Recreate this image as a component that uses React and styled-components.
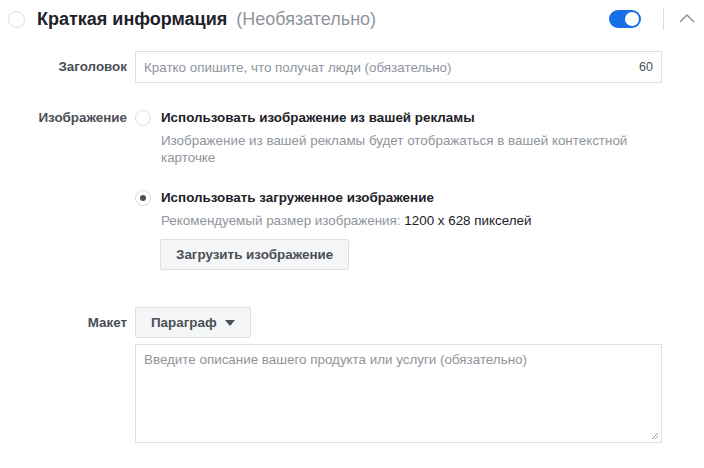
import React from "react";
import styled, { createGlobalStyle } from "styled-components";

const Global = createGlobalStyle`
  html, body { margin: 0; padding: 0; background: #fff; }
  body { font-family: "Liberation Sans", Arial, sans-serif; color: #1d2129; }
  * { box-sizing: border-box; }
`;

const Page = styled.div`
  width: 704px;
  height: 468px;
  overflow: hidden;
  background: #fff;
`;

const Header = styled.div`
  display: flex;
  align-items: center;
  height: 38px;
  padding: 0 10px 0 8px;
`;

const Circle = styled.span`
  width: 17px;
  height: 17px;
  border-radius: 50%;
  border: 1px solid #dadde1;
  background: #fff;
  flex-shrink: 0;
  margin-right: 12px;
`;

const Title = styled.span`
  font-size: 18px;
  font-weight: bold;
  color: #1d2129;
`;

const Optional = styled.span`
  font-size: 18px;
  color: #90949c;
  margin-left: 9px;
`;

const Spacer = styled.div`
  flex: 1;
`;

const Toggle = styled.span`
  position: relative;
  width: 32px;
  height: 18px;
  border-radius: 9px;
  background: #166fe5;
  flex-shrink: 0;
  &::after {
    content: "";
    position: absolute;
    right: 2px;
    top: 2px;
    width: 14px;
    height: 14px;
    border-radius: 50%;
    background: #fff;
  }
`;

const Divider = styled.span`
  width: 1px;
  height: 22px;
  background: #dadde1;
  margin: 0 14px 0 22px;
`;

const Chevron = styled.svg`
  width: 18px;
  height: 18px;
  margin-right: -2px;
`;

const Form = styled.div`
  display: grid;
  grid-template-columns: 127px 527px;
  column-gap: 8px;
  align-items: start;
  margin-top: 13px;
`;

const Label = styled.div`
  text-align: right;
  font-size: 13.4px;
  font-weight: bold;
  color: #4b4f56;
  line-height: 18px;
  padding-top: ${(p) => p.$pt || 0}px;
  margin-top: ${(p) => p.$mt || 0}px;
`;

const Cell = styled.div`
  margin-top: ${(p) => p.$mt || 0}px;
`;

const InputBox = styled.div`
  display: flex;
  align-items: center;
  height: 32px;
  border: 1px solid #dddfe2;
  padding: 0 8px;
  font-size: 13.4px;
`;

const Placeholder = styled.span`
  flex: 1;
  color: #90949c;
`;

const Counter = styled.span`
  color: #4b4f56;
  font-size: 12.5px;
`;

const Option = styled.div`
  display: flex;
  gap: 10px;
  margin-top: ${(p) => p.$mt || 0}px;
`;

const Radio = styled.span`
  position: relative;
  width: 16px;
  height: 16px;
  margin-top: 1px;
  border-radius: 50%;
  border: 1px solid #dadde1;
  flex-shrink: 0;
  &::after {
    content: "";
    display: ${(p) => (p.$checked ? "block" : "none")};
    position: absolute;
    left: 4px;
    top: 4px;
    width: 6px;
    height: 6px;
    border-radius: 50%;
    background: #4b4f56;
  }
`;

const OptionBody = styled.div`
  display: flex;
  flex-direction: column;
`;

const OptionTitle = styled.div`
  font-size: 13.4px;
  font-weight: bold;
  color: #1d2129;
  line-height: 18px;
`;

const OptionDesc = styled.div`
  font-size: 13.4px;
  color: #90949c;
  line-height: 17px;
  margin-top: 5px;
  max-width: 490px;
`;

const Dark = styled.span`
  color: #1d2129;
`;

const Button = styled.button`
  align-self: flex-start;
  height: 31px;
  padding: 0 ${(p) => p.$px || 14}px;
  margin-top: ${(p) => (p.$mt === undefined ? 10 : p.$mt)}px;
  margin-left: ${(p) => p.$ml || 0}px;
  border: 1px solid #dddfe2;
  border-radius: 2px;
  background: #f5f6f7;
  font-family: inherit;
  font-size: 13.4px;
  font-weight: bold;
  color: #4b4f56;
  display: inline-flex;
  align-items: center;
  gap: 8px;
`;

const Caret = styled.span`
  width: 0;
  height: 0;
  border-left: 5px solid transparent;
  border-right: 5px solid transparent;
  border-top: 6px solid #4b4f56;
`;

const TextArea = styled.div`
  position: relative;
  height: 99px;
  margin-top: 6px;
  border: 1px solid #dddfe2;
  padding: 6px 8px;
  font-size: 13.4px;
  color: #90949c;
  line-height: 18px;
`;

const Grip = styled.svg`
  position: absolute;
  right: 2px;
  bottom: 2px;
  width: 8px;
  height: 8px;
`;

export default function App() {
  return (
    <Page>
      <Global />
      <Header>
        <Circle />
        <Title>Краткая информация</Title>
        <Optional>(Необязательно)</Optional>
        <Spacer />
        <Toggle />
        <Divider />
        <Chevron viewBox="0 0 18 18">
          <path d="M2 12 L9 5 L16 12" fill="none" stroke="#90949c" strokeWidth="1.5" />
        </Chevron>
      </Header>
      <Form>
        <Label $pt={7}>Заголовок</Label>
        <Cell>
          <InputBox>
            <Placeholder>Кратко опишите, что получат люди (обязательно)</Placeholder>
            <Counter>60</Counter>
          </InputBox>
        </Cell>

        <Label $mt={26}>Изображение</Label>
        <Cell $mt={26}>
          <Option>
            <Radio />
            <OptionBody>
              <OptionTitle>Использовать изображение из вашей рекламы</OptionTitle>
              <OptionDesc>
                Изображение из вашей рекламы будет отображаться в вашей контекстной карточке
              </OptionDesc>
            </OptionBody>
          </Option>
          <Option $mt={23}>
            <Radio $checked />
            <OptionBody>
              <OptionTitle>Использовать загруженное изображение</OptionTitle>
              <OptionDesc>
                Рекомендуемый размер изображения: <Dark>1200 x 628 пикселей</Dark>
              </OptionDesc>
              <Button $ml={-1} $px={15}>Загрузить изображение</Button>
            </OptionBody>
          </Option>
        </Cell>

        <Label $mt={37} $pt={7}>Макет</Label>
        <Cell $mt={37}>
          <Button as="div" $mt={0} $px={15}>
            Параграф <Caret />
          </Button>
          <TextArea>
            Введите описание вашего продукта или услуги (обязательно)
            <Grip viewBox="0 0 8 8">
              <path d="M7 1 L1 7 M7 4 L4 7" stroke="#90949c" strokeWidth="1" />
            </Grip>
          </TextArea>
        </Cell>
      </Form>
    </Page>
  );
}
